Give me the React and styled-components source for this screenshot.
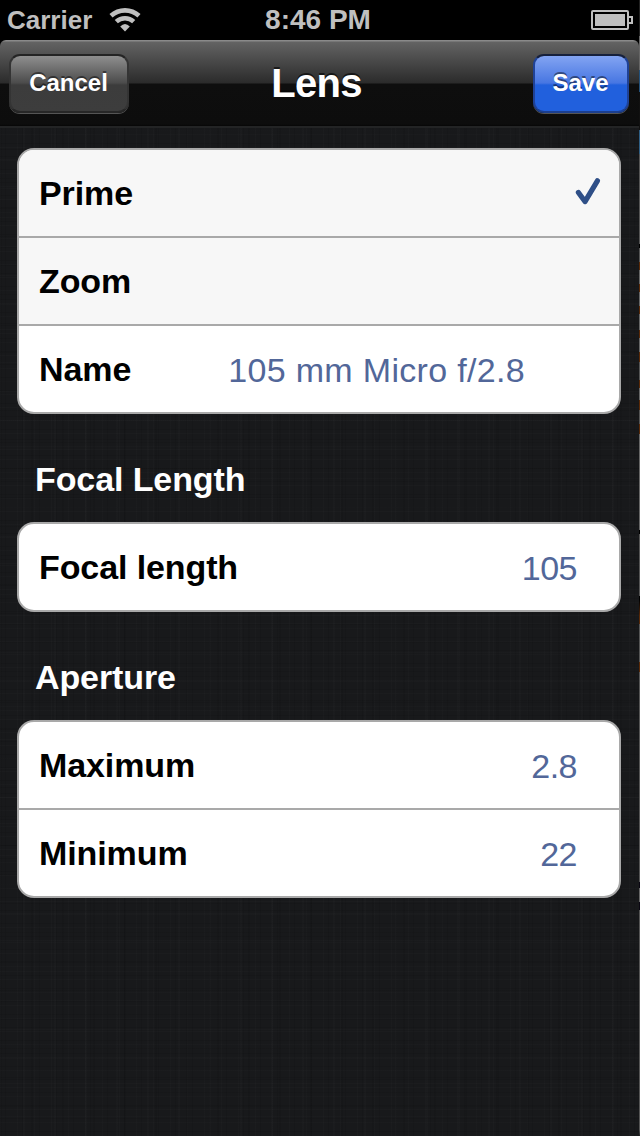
import React from "react";
import styled, { createGlobalStyle } from "styled-components";

const Global = createGlobalStyle`
  * { box-sizing: border-box; }
  body { margin: 0; background: #18191b; font-family: "Liberation Sans", Arial, sans-serif; }
`;

const Frame = styled.div`
  width: 640px;
  height: 1136px;
  display: flex;
`;

const EdgeStrip = styled.div`
  width: 1px;
  flex: none;
  background: linear-gradient(
    #222 0 36px, #666 36px 70px, #24517a 70px 92px, #111 92px 130px, #2f5f85 130px 154px,
    #555 154px 244px, #000 244px 248px, #555 248px 262px, #5a2a08 262px 270px, #666 270px 284px,
    #5a2a08 284px 292px, #666 292px 306px, #5a2a08 306px 314px, #666 314px 330px, #5a2a08 330px 338px,
    #666 338px 352px, #5a2a08 352px 362px, #555 362px 380px, #5a2a08 380px 388px, #666 388px 400px,
    #5a2a08 400px 410px, #555 410px 424px, #5a2a08 424px 434px, #666 434px 530px, #000 530px 534px,
    #555 534px 596px, #000 596px 600px, #5a2a08 616px 624px, #555 624px 662px, #5a2a08 662px 672px,
    #555 672px 882px, #0a0612 882px 888px, #666 888px 902px, #0a0612 902px 910px, #555 910px 1130px, #222
  );
`;

const Screen = styled.div`
  width: 639px;
  overflow: hidden;
  display: flex;
  flex-direction: column;
  background-color: #18191b;
  background-image:
    repeating-linear-gradient(90deg, rgba(255,255,255,0.012) 0 1px, transparent 1px 5px, rgba(0,0,0,0.08) 5px 6px, transparent 6px 17px),
    repeating-linear-gradient(90deg, rgba(0,0,0,0.07) 0 2px, transparent 2px 23px, rgba(255,255,255,0.01) 23px 25px, transparent 25px 31px),
    repeating-linear-gradient(0deg, rgba(255,255,255,0.012) 0 1px, transparent 1px 4px, rgba(0,0,0,0.08) 4px 5px, transparent 5px 13px),
    repeating-linear-gradient(0deg, rgba(0,0,0,0.07) 0 1px, transparent 1px 19px, rgba(255,255,255,0.01) 19px 20px, transparent 20px 29px);
`;

const StatusBar = styled.div`
  height: 40px;
  flex: none;
  display: grid;
  grid-template-columns: 1fr auto 1fr;
  align-items: center;
  padding: 0 6px 0 7px;
  background: #000;
  color: #bfbfbf;
  font-size: 26px;
  line-height: 40px;
  font-weight: 700;
`;

const Carrier = styled.div`
  display: flex;
  align-items: center;
  gap: 17px;
`;

const Clock = styled.div`
  margin-right: 4px;
  font-size: 28px;
`;

const BatteryWrap = styled.div`
  display: flex;
  justify-content: flex-end;
`;

const NavBack = styled.div`
  flex: none;
  background: #000;
`;

const NavBar = styled.div`
  height: 88px;
  display: grid;
  grid-template-columns: 1fr auto 1fr;
  align-items: start;
  padding: 14px 10px 0 9px;
  border-radius: 6px 6px 0 0;
  border-bottom: 2px solid #232425;
  background: linear-gradient(#8a8a8a 0 1px, #636363 2px, #2b2b2b 43px, #0e0e0e 44px, #0d0d0d 84px, #060606 86px);
`;

const Title = styled.h1`
  margin: 0 5px 0 0;
  color: #fff;
  font-size: 40px;
  line-height: 58px;
  font-weight: 700;
  letter-spacing: -0.7px;
  text-shadow: 0 -2px 0 rgba(0, 0, 0, 0.6);
`;

const BarButton = styled.button`
  justify-self: ${(p) => (p.$primary ? "end" : "start")};
  width: ${(p) => (p.$primary ? "96px" : "120px")};
  height: 59px;
  margin: 0;
  padding: 0 1px 1px 0;
  border: 2px solid;
  border-color: ${(p) => (p.$primary ? "#16203c #1f4297 #1c3f8f" : "#242424 #343434 #272727")};
  border-radius: 11px;
  box-shadow: 0 1px 0 #555;
  color: #fff;
  font: 700 24px "Liberation Sans", Arial, sans-serif;
  text-shadow: 0 -2px 0 rgba(0, 0, 0, 0.45);
  background: ${(p) =>
    p.$primary
      ? "linear-gradient(#83a4f2, #4776e2 27px, #2160dd 29px, #2160dd)"
      : "linear-gradient(#8f8f8f, #4b4b4b 27px, #3c3c3c 29px, #3d3d3d)"};
`;

const Content = styled.main`
  display: flex;
  flex-direction: column;
  padding: 20px 18px 0 17px;
`;

const Card = styled.section`
  border: 2px solid #a9a9a9;
  border-radius: 17px;
  overflow: hidden;
  background: #fff;
`;

const Row = styled.div`
  height: ${(p) => (p.$last ? "86px" : "88px")};
  display: flex;
  align-items: center;
  justify-content: space-between;
  padding: 0 ${(p) => p.$right || "42px"} 0 20px;
  border-bottom: ${(p) => (p.$last ? "none" : "2px solid #a9a9a9")};
  background: ${(p) => (p.$shaded ? "#f7f7f7" : "transparent")};
`;

const Label = styled.span`
  color: #000;
  font-size: 34px;
  line-height: 40px;
  font-weight: 700;
  letter-spacing: -0.1px;
`;

const Value = styled.span`
  color: #526799;
  font-size: 34px;
  line-height: 40px;
  padding-top: 2px;
  letter-spacing: ${(p) => p.$tracking || "-0.5px"};
`;

const SectionTitle = styled.h2`
  margin: 0;
  padding: 45px 0 0 18px;
  height: 108px;
  color: #fff;
  font-size: 34px;
  line-height: 40px;
  font-weight: 700;
  letter-spacing: -0.1px;
`;

const Wifi = () => (
  <svg width="32" height="24" viewBox="0 0 32 24" fill="none" stroke="#bfbfbf" strokeWidth="4.6">
    <path d="M2 7.8A20.7 20.7 0 0 1 30 7.8" />
    <path d="M7.3 13.6A12.8 12.8 0 0 1 24.7 13.6" />
    <path d="M16 23.4L11.2 18.6Q16 13.2 20.8 18.6Z" fill="#bfbfbf" stroke="none" />
  </svg>
);

const Battery = () => (
  <svg width="42" height="20" viewBox="0 0 42 20" fill="none" stroke="#bfbfbf" strokeWidth="2">
    <rect x="1" y="1" width="36" height="18" rx="1" />
    <rect x="4" y="4" width="30" height="12" fill="#bfbfbf" stroke="none" />
    <path d="M38 7H41V13H38" />
  </svg>
);

const Check = () => (
  <svg width="26" height="30" viewBox="0 0 26 30" fill="none" stroke="#2f4f87" strokeWidth="5.2" strokeLinecap="round" strokeLinejoin="round">
    <path d="M3.4 14.4L10 23.6L22.4 2.8" />
  </svg>
);

export default function App() {
  return (
    <Frame>
      <Global />
      <Screen>
        <StatusBar>
          <Carrier>Carrier<Wifi /></Carrier>
          <Clock>8:46 PM</Clock>
          <BatteryWrap><Battery /></BatteryWrap>
        </StatusBar>
        <NavBack>
          <NavBar>
            <BarButton>Cancel</BarButton>
            <Title>Lens</Title>
            <BarButton $primary>Save</BarButton>
          </NavBar>
        </NavBack>
        <Content>
          <Card>
            <Row $shaded $right="18px"><Label>Prime</Label><Check /></Row>
            <Row $shaded><Label>Zoom</Label></Row>
            <Row $last $right="94px"><Label>Name</Label><Value $tracking="0.32px">105 mm Micro f/2.8</Value></Row>
          </Card>
          <SectionTitle>Focal Length</SectionTitle>
          <Card>
            <Row $last><Label>Focal length</Label><Value>105</Value></Row>
          </Card>
          <SectionTitle>Aperture</SectionTitle>
          <Card>
            <Row><Label>Maximum</Label><Value>2.8</Value></Row>
            <Row $last><Label>Minimum</Label><Value>22</Value></Row>
          </Card>
        </Content>
      </Screen>
      <EdgeStrip />
    </Frame>
  );
}
